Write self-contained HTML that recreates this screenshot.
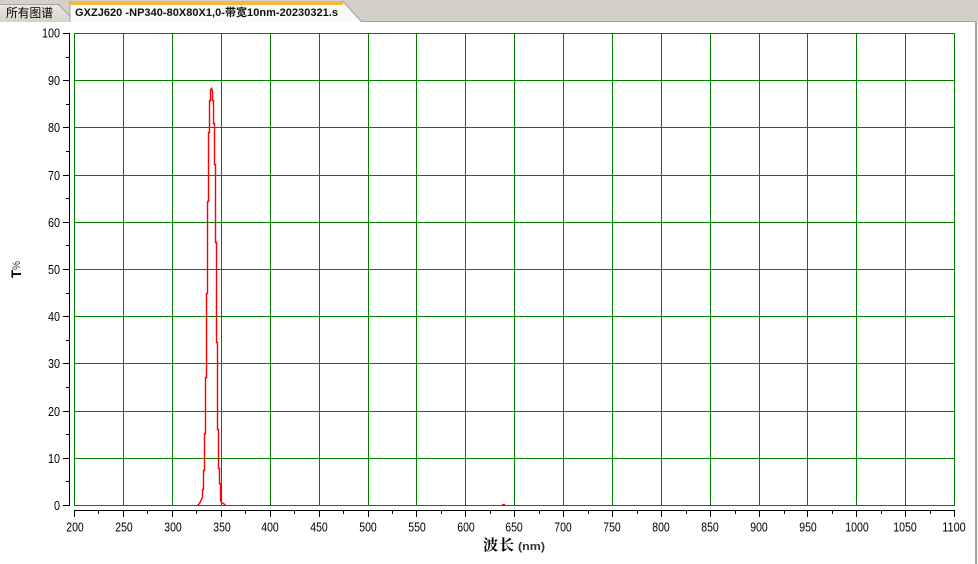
<!DOCTYPE html>
<html>
<head>
<meta charset="utf-8">
<style>
html,body{margin:0;padding:0;background:#fff;width:978px;height:564px;overflow:hidden}
svg{display:block}
.n{font:13px "Liberation Sans",sans-serif;fill:#000}
</style>
</head>
<body>
<svg width="978" height="564" viewBox="0 0 978 564" xmlns="http://www.w3.org/2000/svg">
<defs>
<linearGradient id="t1" x1="0" y1="0" x2="0" y2="1"><stop offset="0" stop-color="#e9e7e1"/><stop offset="1" stop-color="#d6d3cb"/></linearGradient>
</defs>
<rect width="978" height="22" fill="#d4d0c8"/>
<rect x="0" y="22" width="975" height="542" fill="#fff"/>
<rect x="975" y="21" width="2" height="543" fill="#a3a3a0"/>
<rect x="977" y="21" width="1" height="543" fill="#f4f3f0"/>
<rect x="361" y="21" width="615" height="1" fill="#a3a3a0"/>
<!-- tab 1 -->
<path d="M0 5H58L71 18V22H0Z" fill="url(#t1)"/>
<path d="M0 4.500H58.500L71 17" fill="none" stroke="#a8a8a4"/>
<text x="6" y="17" font-family="'Liberation Sans','Noto Sans CJK SC',sans-serif" font-size="12" fill="#000" textLength="47" lengthAdjust="spacingAndGlyphs">所有图谱</text>
<!-- tab 2 -->
<path d="M70 22V1H342L361 22Z" fill="#fbfaf8"/>
<rect x="70" y="1" width="273" height="4" fill="#f6b93f"/>
<path d="M70 1V22" stroke="#a8a8a4" fill="none"/>
<path d="M342.500 1L361.500 21.500" stroke="#a3a3a0" fill="none"/>
<text x="75" y="16" font-family="'Liberation Sans','Noto Sans CJK SC',sans-serif" font-size="11" font-weight="700" fill="#111" textLength="263" lengthAdjust="spacing">GXZJ620 -NP340-80X80X1,0-带宽10nm-20230321.s</text>
<!-- grid -->
<path shape-rendering="crispEdges" fill="none" stroke="#008000" stroke-width="1" d="M74.500 33V505M123.500 33V505M172.500 33V505M221.500 33V505M270.500 33V505M319.500 33V505M368.500 33V505M416.500 33V505M465.500 33V505M514.500 33V505M563.500 33V505M612.500 33V505M661.500 33V505M710.500 33V505M759.500 33V505M807.500 33V505M856.500 33V505M905.500 33V505M954.500 33V505M74 33.500H955M74 80.500H955M74 127.500H955M74 175.500H955M74 222.500H955M74 269.500H955M74 316.500H955M74 363.500H955M74 411.500H955M74 458.500H955M74 505.500H955"/>
<!-- baseline and curve -->
<path shape-rendering="crispEdges" fill="none" stroke="#f00" d="M74 505.500H198M225 505.500H955M502 504.500H505"/>
<polyline fill="none" stroke="#f00" stroke-width="1.400" stroke-linejoin="miter" points="197.500,505.500 199.500,503.500 200.500,501.500 201.500,499.500 202.500,497.500 202.500,489.500 203.500,489.500 203.500,470.500 204.500,470.500 204.500,433.500 205.500,433.500 205.500,377.500 206.500,377.500 206.500,293.500 207.500,293.500 207.500,201.500 208.500,201.500 208.500,132.500 209.500,132.500 209.500,100.500 210.500,100.500 210.500,89.500 211.500,89.500 211.500,87.500 212.500,92.500 212.500,100.500 213.500,100.500 213.500,123.500 214.500,123.500 214.500,164.500 215.500,164.500 215.500,242.500 216.500,242.500 216.500,342.500 217.500,342.500 217.500,429.500 218.500,429.500 218.500,468.500 219.500,468.500 219.500,483.500 220.500,483.500 220.500,500.500 221.500,502.500 223.500,503.500 225.500,505.500"/>
<!-- axes -->
<path shape-rendering="crispEdges" fill="none" stroke="#000" stroke-width="1" d="M69.500 33V506M63 33.500H70M63 80.500H70M63 127.500H70M63 175.500H70M63 222.500H70M63 269.500H70M63 316.500H70M63 363.500H70M63 411.500H70M63 458.500H70M63 505.500H70M66 57.500H70M66 104.500H70M66 151.500H70M66 198.500H70M66 245.500H70M66 293.500H70M66 340.500H70M66 387.500H70M66 434.500H70M66 481.500H70M74 510.500H955M74.500 510V517M123.500 510V517M172.500 510V517M221.500 510V517M270.500 510V517M319.500 510V517M368.500 510V517M416.500 510V517M465.500 510V517M514.500 510V517M563.500 510V517M612.500 510V517M661.500 510V517M710.500 510V517M759.500 510V517M807.500 510V517M856.500 510V517M905.500 510V517M954.500 510V517M98.500 510V514M147.500 510V514M196.500 510V514M245.500 510V514M294.500 510V514M343.500 510V514M392.500 510V514M441.500 510V514M490.500 510V514M539.500 510V514M588.500 510V514M637.500 510V514M686.500 510V514M735.500 510V514M784.500 510V514M832.500 510V514M881.500 510V514M930.500 510V514"/>
<!-- y labels -->
<g class="n" text-anchor="end">
<text class="n" x="60" y="37.500" textLength="18" lengthAdjust="spacingAndGlyphs">100</text>
<text class="n" x="60" y="85" textLength="12" lengthAdjust="spacingAndGlyphs">90</text>
<text class="n" x="60" y="132" textLength="12" lengthAdjust="spacingAndGlyphs">80</text>
<text class="n" x="60" y="180" textLength="12" lengthAdjust="spacingAndGlyphs">70</text>
<text class="n" x="60" y="227" textLength="12" lengthAdjust="spacingAndGlyphs">60</text>
<text class="n" x="60" y="274" textLength="12" lengthAdjust="spacingAndGlyphs">50</text>
<text class="n" x="60" y="321" textLength="12" lengthAdjust="spacingAndGlyphs">40</text>
<text class="n" x="60" y="368" textLength="12" lengthAdjust="spacingAndGlyphs">30</text>
<text class="n" x="60" y="416" textLength="12" lengthAdjust="spacingAndGlyphs">20</text>
<text class="n" x="60" y="463" textLength="12" lengthAdjust="spacingAndGlyphs">10</text>
<text class="n" x="60" y="510" textLength="6" lengthAdjust="spacingAndGlyphs">0</text>
</g>
<!-- x labels -->
<g class="n" text-anchor="middle">
<text class="n" x="75" y="531.500" textLength="17.500" lengthAdjust="spacingAndGlyphs">200</text>
<text class="n" x="124" y="531.500" textLength="17.500" lengthAdjust="spacingAndGlyphs">250</text>
<text class="n" x="173" y="531.500" textLength="17.500" lengthAdjust="spacingAndGlyphs">300</text>
<text class="n" x="222" y="531.500" textLength="17.500" lengthAdjust="spacingAndGlyphs">350</text>
<text class="n" x="270" y="531.500" textLength="17.500" lengthAdjust="spacingAndGlyphs">400</text>
<text class="n" x="319" y="531.500" textLength="17.500" lengthAdjust="spacingAndGlyphs">450</text>
<text class="n" x="368" y="531.500" textLength="17.500" lengthAdjust="spacingAndGlyphs">500</text>
<text class="n" x="417" y="531.500" textLength="17.500" lengthAdjust="spacingAndGlyphs">550</text>
<text class="n" x="466" y="531.500" textLength="17.500" lengthAdjust="spacingAndGlyphs">600</text>
<text class="n" x="514" y="531.500" textLength="17.500" lengthAdjust="spacingAndGlyphs">650</text>
<text class="n" x="563" y="531.500" textLength="17.500" lengthAdjust="spacingAndGlyphs">700</text>
<text class="n" x="612" y="531.500" textLength="17.500" lengthAdjust="spacingAndGlyphs">750</text>
<text class="n" x="661" y="531.500" textLength="17.500" lengthAdjust="spacingAndGlyphs">800</text>
<text class="n" x="710" y="531.500" textLength="17.500" lengthAdjust="spacingAndGlyphs">850</text>
<text class="n" x="759" y="531.500" textLength="17.500" lengthAdjust="spacingAndGlyphs">900</text>
<text class="n" x="808" y="531.500" textLength="17.500" lengthAdjust="spacingAndGlyphs">950</text>
<text class="n" x="857" y="531.500" textLength="23.500" lengthAdjust="spacingAndGlyphs">1000</text>
<text class="n" x="905" y="531.500" textLength="23.500" lengthAdjust="spacingAndGlyphs">1050</text>
<text class="n" x="954" y="531.500" textLength="23.500" lengthAdjust="spacingAndGlyphs">1100</text>
</g>
<!-- axis titles -->
<text x="483" y="550" font-family="'Liberation Serif','Noto Serif CJK SC',serif" font-size="15" font-weight="700" fill="#000" textLength="31" lengthAdjust="spacing">波长</text>
<text x="518" y="550" font-family="'Liberation Sans',sans-serif" font-size="11" font-weight="700" fill="#333" textLength="27" lengthAdjust="spacingAndGlyphs">(nm)</text>
<g transform="translate(21,278) rotate(-90)">
<text x="0" y="0" font-family="'Liberation Sans',sans-serif" font-size="14" font-weight="700" fill="#000" textLength="8" lengthAdjust="spacingAndGlyphs">T</text>
<text x="8" y="-1" font-family="'Liberation Sans',sans-serif" font-size="11" fill="#333" textLength="9" lengthAdjust="spacingAndGlyphs">%</text>
</g>
</svg>
</body>
</html>
